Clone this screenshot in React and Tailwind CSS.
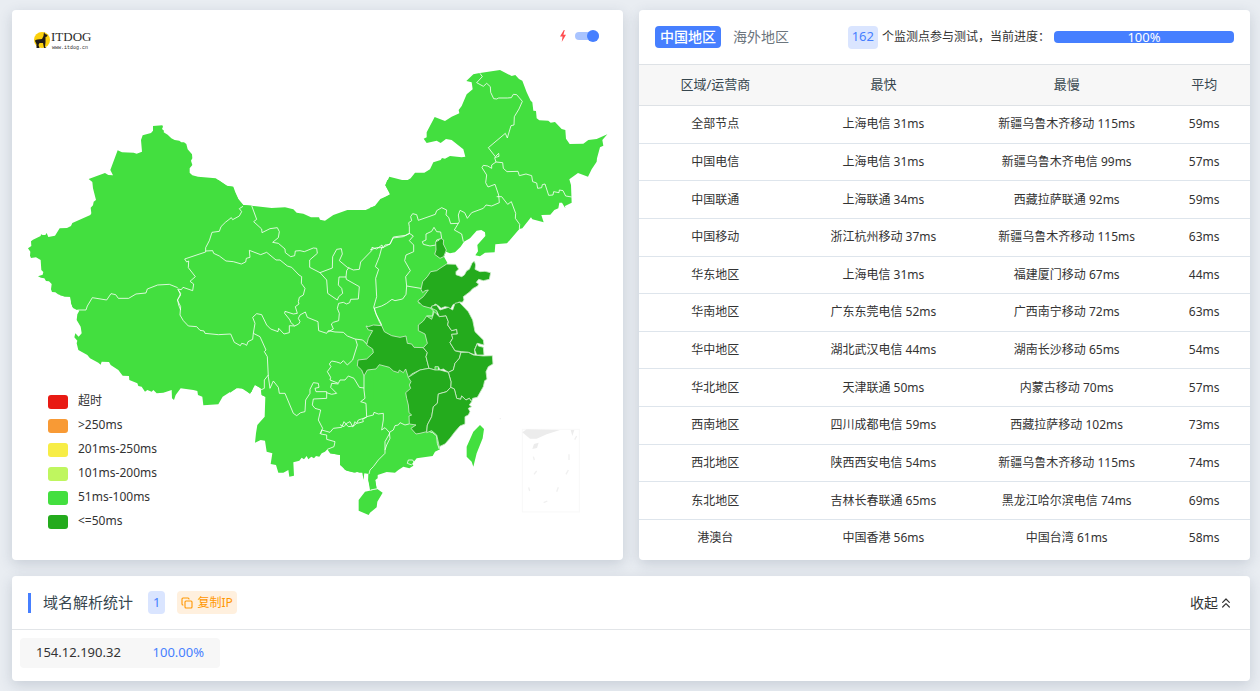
import React from "react";
import { ChevronsUp, Copy } from "lucide-react";

const LAND = "#43df3f";
const FAST = "#24ab1d";

/* Each sheet is drawn at three times the size of the map canvas. */
const SHEETS = [
  {
    x: 12, y: 110,
    land: ["423,48 451,46 453,50 450,57 456,62 455,67 467,74 478,85 488,90 502,92 508,97 516,97 523,102 527,118 540,133 541,145 537,152 541,165 533,175 533,188 541,196 558,200 611,205 647,229 662,230 666,243 680,270 693,285 720,287 720,600 195,600 183,594 177,580 176,560 158,560 138,553 130,547 120,546 117,538 119,522 111,514 102,513 97,505 87,503 78,499 92,494 94,486 88,480 86,450 72,442 57,444 54,437 55,425 48,415 58,408 57,394 63,389 86,378 87,373 92,375 100,375 104,369 109,381 129,377 143,355 165,354 177,348 181,339 235,315 238,310 236,293 243,286 245,275 252,270 243,235 241,216 230,207 279,189 289,195 303,196 295,180 317,121 330,127 365,128 374,131 390,125 387,90 392,76 417,69 423,62"],
    lines: [
      "693,289 682,296 689,305 682,318 662,329 658,323 640,337 627,350 622,364 600,367 592,392 581,413 581,426 518,447 524,456 530,453 529,473 550,500 534,514 545,522 542,542 513,532 508,539 497,537",
      "497,533 472,523 437,525 406,537 402,549 372,552 350,565 319,565 311,554 297,551 284,570 241,563 226,588 222,600 196,600",
      "497,537 506,550 497,570 500,585 506,600",
    ],
  },
  {
    x: 200, y: 180,
    land: ["55,0 80,17 100,20 106,37 115,57 130,75 155,77 215,84 255,82 280,88 290,98 310,101 333,112 357,112 360,119 375,122 400,105 442,90 497,90 525,77 541,57 570,44 569,38 556,16 562,0 630,0 630,600 0,600 0,0"],
    lines: [
      "155,77 170,118 161,125 185,147 186,158 210,146 232,143 238,155 235,173 218,187 235,190 255,207 256,218 272,230 284,227 286,213 300,212 313,215 340,204 350,205 352,220 329,240 329,262 360,278 397,264 398,230 410,208 424,206 427,222 418,242 442,262 460,270 478,268 482,246 515,212 516,202 530,207 546,195 548,203 570,192 579,174 610,170 630,160",
      "360,278 380,300 383,340 412,360 416,350 428,340 425,325 415,315 417,291 438,291 439,298 478,320 475,357 452,358 449,368 440,372 430,367 416,370 412,385 418,400 416,422 400,427 394,432 400,447 384,456",
      "438,291 440,272 447,262",
      "546,200 538,230 526,260 536,268 527,295 530,350 521,382 530,405 543,430 545,438",
      "17,213 38,212 41,220 58,228 78,243 100,245 124,252 137,246 139,235 150,232 148,211 182,224 200,217 228,240 240,240 262,258 275,262 297,285 305,290 304,310 315,325 310,345 298,352 295,365 297,372 286,380 292,400 280,402 255,394 254,400 270,420 272,427 284,438 296,432 300,425 295,415 300,405 316,396 322,412 354,425 356,452 380,460 385,452 405,456 430,457 442,468 465,477 488,480 500,492",
      "284,438 268,437 268,458 252,462 236,445 234,455 212,447 200,435 185,404 170,401 158,412 165,430 160,460",
      "0,451 12,453 15,460 55,464 92,462 103,487 121,497 125,490 133,492 140,496 144,485 158,478 160,460",
    ],
  },
  {
    x: 370, y: 60,
    land: ["0,443 20,437 33,419 60,403 46,376 58,350 108,363 122,355 135,338 163,338 180,328 190,307 212,300 216,294 225,296 240,288 275,292 286,290 280,268 245,240 228,237 212,249 200,242 170,249 161,236 170,232 170,217 194,171 225,183 245,170 268,160 266,150 275,138 290,103 308,88 305,67 289,63 310,43 325,40 390,30 425,48 436,45 447,57 457,62 470,97 482,122 487,127 490,152 498,153 500,175 508,181 535,182 542,188 555,186 575,207 586,210 588,236 599,252 640,251 655,240 680,237 712,223 697,240 700,257 690,262 681,295 680,305 665,328 654,350 624,339 598,358 603,375 605,428 585,438 586,445 576,428 568,428 565,445 553,450 541,464 514,465 521,487 487,478 483,472 457,505 448,507 411,550 376,553 374,577 345,578 330,589 316,586 324,574 322,555 346,528 345,517 334,510 320,512 300,535 282,545 272,560 255,577 240,580 228,575 222,590 222,600 0,600"],
    lines: [
      "330,40 337,50 320,68 340,79 350,70 361,80 362,97 371,116 380,117 386,114 412,114 424,113 430,103 440,104 457,124 447,147 433,170 432,195 423,197 412,234 406,220 355,263 376,290 386,280 387,289 374,293 378,306",
      "378,306 398,308 400,325 411,335 444,334 448,347 468,342 485,347 488,365 500,369 503,385 515,383 517,374 525,372 536,406 549,405 551,395 567,398 568,390 579,392 587,408 605,411",
      "378,306 365,315 365,325 353,318 340,316 336,323 350,345 347,368 354,381 375,373 386,405",
      "380,410 395,410 413,433 424,425 437,460 436,475 449,493 448,507",
      "386,405 388,428 365,438 348,435 340,445 305,458 292,475 284,458 270,451 265,465 268,485 253,510 275,522 280,545",
      "265,490 242,491 236,472 228,465 230,450 215,443 200,452 196,463 145,481 140,464 128,461 122,470 125,482 116,488 118,500 118,520 106,526 70,531 60,553 45,555 40,563 20,563 0,570",
    ],
    loops: ["192,502 200,515 212,516 215,535 200,540 198,555 180,558 160,553 157,545 168,540 168,522 185,514"],
    fast: ["213,535 221,540 220,552 229,570 221,590 210,595 194,583 198,570 197,545 207,541"],
  },
  {
    x: 370, y: 200,
    land: ["0,150 225,150 222,170 232,188 180,300 200,360 0,360"],
    lines: [
      "118,100 130,108 118,122 131,135 131,155 108,165 104,182 121,212 107,230 110,258 158,266 155,272",
      "110,258 108,283 98,297 75,302 66,298 50,310 35,318 12,325",
    ],
    fast: ["230,192 257,193 266,207 258,215 258,224 275,230 283,225 290,212 298,208 306,190 313,183 317,195 315,208 330,215 345,214 362,218 358,238 340,242 326,238 319,247 326,252 323,258 308,266 300,275 280,290 282,300 277,307 266,306 262,315 250,313 243,325 238,330 235,322 225,320 213,325 205,317 195,312 190,321 180,324 158,318 143,303 160,290 175,270 165,272 158,278 153,268 158,245 172,230 182,215 200,212 210,205"],
  },
  {
    x: 340, y: 290,
    land: ["0,0 250,0 290,50 300,450 298,480 0,480"],
    lines: [
      "235,38 265,48 280,62 278,78 260,78",
      "103,53 107,70 118,95 125,107",
      "72,258 72,300 75,325 62,335 78,340 80,380 100,375 102,367 115,372 130,370 130,390 125,420 135,413 148,427 150,445 140,465 135,480",
      "148,427 160,420 165,407 175,405 180,398 195,405 207,402",
      "80,380 68,388 70,395 60,398 50,400 38,410 30,395 20,400 12,410 0,404",
    ],
    fast: [
      "78,108 85,110 100,105 125,107 133,125 155,137 180,142 198,138 202,160 215,162 222,172 250,173 262,188 258,200 267,235 240,240 215,252 205,262 197,237 190,248 178,240 175,248 160,243 148,232 118,224 108,237 82,240 72,258 65,240 52,228 54,210 80,207 100,188 98,177 80,165 85,145 98,122 85,120",
      "283,65 298,80 318,77 325,95 323,105 335,122 350,118 352,132 335,133 338,145 330,158 345,182 363,187 358,205 345,220 340,240 325,247 310,237 300,240 295,230 285,230 285,240 267,235 258,200 262,188 250,173 262,160 255,132 235,122 235,105 250,93 260,78 275,88",
      "275,48 290,45 300,60 325,52 338,60 345,40 358,37 385,65 398,90 405,125 430,150 432,165 412,160 404,178 405,195 385,187 365,185 345,182 330,158 338,145 335,133 352,132 350,118 335,122 323,105 325,95 318,77 298,80 290,62 275,55",
      "412,160 415,168 430,172 432,195 410,195 404,180",
      "363,187 385,187 400,195 430,198 457,197 459,222 445,230 438,245 441,268 434,272 430,290 412,322 398,325 395,335 388,325 378,330 365,318 362,328 350,325 343,297 332,292 333,275 325,247 340,240 345,220 358,205",
      "205,262 240,240 267,235 285,240 300,240 325,247 333,275 332,292 320,305 295,312 292,340 280,350 275,380 262,405 260,425 240,430 228,432 213,415 228,405 208,402 207,378 215,375 207,368 205,345 200,325 197,308 212,295 208,285 213,275",
      "332,292 343,297 350,325 362,328 365,318 378,330 388,325 395,335 388,345 395,350 385,355 390,365 385,375 375,380 375,402 360,408 345,425 330,445 315,462 298,470 290,435 275,422 260,428 262,405 275,380 280,350 292,340 295,312 320,305",
    ],
  },
  {
    x: 230, y: 300,
    land: ["0,0 430,0 430,520 442,525 435,540 440,567 420,570 415,540 415,515 402,520 400,540 398,518 388,518 380,515 370,517 345,510 330,490 332,465 300,460 292,448 285,455 275,460 268,470 258,468 252,475 244,470 235,478 230,468 222,478 215,473 208,482 190,487 192,527 178,530 175,510 160,518 145,518 138,495 122,492 127,460 110,455 105,422 92,420 75,428 78,400 82,375 104,350 106,290 95,285 92,265 72,253 65,275 58,280 35,265 20,265 0,278"],
    lines: [
      "70,100 90,110 108,150 103,155 112,170 115,230 120,265 130,243 145,262 148,280 165,280 190,340 200,347 212,338 225,335 227,300 240,280 240,268 250,248 265,250 267,262 255,265 258,275 290,275 290,295 250,297 247,315 255,325 272,330 265,360 278,385 270,402",
      "115,225 103,240 103,265 92,270",
      "290,278 305,283 320,280 302,262 305,250 325,252",
      "377,118 382,135 368,180 352,195 340,182 332,190 320,186 305,183 298,192 303,200 292,215 302,232 300,240 325,250 330,240 345,240 355,228 372,235 388,262 402,264",
      "275,390 272,402 290,405 290,418 315,425 312,440 292,448",
      "410,352 385,360 380,370 375,365 370,378 355,380 342,365 335,382 310,385 300,397 275,390",
    ],
  },
  {
    x: 330, y: 400,
    land: [
      "0,0 300,0 300,90 325,140 330,148 315,155 308,168 260,175 248,190 250,197 238,205 220,200 205,210 195,218 170,216 143,225 143,235 136,240 140,268 122,268 115,240 117,222 103,220 100,238 97,215 90,212 75,218 50,212 30,195 30,165 0,160",
      "105,275 142,267 158,278 142,305 140,322 120,338 116,345 86,332 86,300",
      "450,75 462,87 458,115 440,160 430,200 425,185 410,170 410,140 430,95",
    ],
    lines: [
      "180,98 165,125 165,160 145,180 130,200 120,210 117,222",
      "245,195 232,190 235,180 248,180 252,187 245,195",
      "122,270 142,266",
      "290,92 308,98 320,108 322,130 328,148",
    ],
  },
  {
    x: 60, y: 280,
    land: ["0,46 30,50 37,80 58,92 52,103 50,120 62,140 65,160 56,170 46,160 43,172 52,182 50,190 55,210 82,225 90,235 115,248 122,254 125,245 147,246 152,255 175,270 188,287 207,288 208,300 232,310 235,318 245,320 255,335 262,330 275,335 280,330 290,340 310,338 335,330 336,355 342,360 347,345 362,325 400,330 412,333 414,345 427,350 430,376 475,373 488,350 530,323 555,327 570,342 585,315 603,325 605,345 616,350 660,350 660,0 0,0"],
    lines: ["355,30 362,45 352,60 362,80 360,105 370,122 385,138 410,140 420,151"],
  },
];

const LEGEND = [
  ["超时", "bg-[#e81a13]"],
  [">250ms", "bg-[#f89a35]"],
  ["201ms-250ms", "bg-[#f7ed46]"],
  ["101ms-200ms", "bg-[#bff65f]"],
  ["51ms-100ms", "bg-[#43df3f]"],
  ["<=50ms", "bg-[#24ab1d]"],
];

const ROWS = [
  ["全部节点", "上海电信 31ms", "新疆乌鲁木齐移动 115ms", "59ms"],
  ["中国电信", "上海电信 31ms", "新疆乌鲁木齐电信 99ms", "57ms"],
  ["中国联通", "上海联通 34ms", "西藏拉萨联通 92ms", "59ms"],
  ["中国移动", "浙江杭州移动 37ms", "新疆乌鲁木齐移动 115ms", "63ms"],
  ["华东地区", "上海电信 31ms", "福建厦门移动 67ms", "44ms"],
  ["华南地区", "广东东莞电信 52ms", "广西南宁移动 72ms", "63ms"],
  ["华中地区", "湖北武汉电信 44ms", "湖南长沙移动 65ms", "54ms"],
  ["华北地区", "天津联通 50ms", "内蒙古移动 70ms", "57ms"],
  ["西南地区", "四川成都电信 59ms", "西藏拉萨移动 102ms", "73ms"],
  ["西北地区", "陕西西安电信 54ms", "新疆乌鲁木齐移动 115ms", "74ms"],
  ["东北地区", "吉林长春联通 65ms", "黑龙江哈尔滨电信 74ms", "69ms"],
  ["港澳台", "中国香港 56ms", "中国台湾 61ms", "58ms"],
];

const place = (s) => `translate(${s.x} ${s.y}) scale(0.33333)`;

function ChinaMap() {
  return (
    <svg viewBox="12 10 611 550" className="h-auto w-full [grid-area:1/1]" role="img" aria-label="中国地图">
      {SHEETS.map((s, i) => (
        <g key={i} transform={place(s)} fill={LAND}>
          {s.land.map((p) => <polygon key={p} points={p} />)}
        </g>
      ))}
      {SHEETS.map((s, i) => (
        <g key={i} transform={place(s)} fill="none" stroke="#fff" strokeOpacity="0.8" strokeWidth="3" strokeLinejoin="round">
          {s.lines.map((p) => <polyline key={p} points={p} />)}
          {(s.loops || []).map((p) => <polygon key={p} points={p} />)}
        </g>
      ))}
      {SHEETS.map((s, i) => (
        <g key={i} transform={place(s)} fill={FAST} stroke="#cdebc9" strokeWidth="2.5" strokeLinejoin="round">
          {(s.fast || []).map((p) => <polygon key={p} points={p} />)}
        </g>
      ))}
      <g transform="translate(330 400) scale(0.33333)">
        <rect x="577" y="88" width="171" height="248" fill="none" stroke="#f8f8f8" strokeWidth="3" />
        <path d="M577 97 590 88 690 90 650 103 620 116 600 116ZM722 90 733 90 727 108ZM612 132 626 128 621 144 607 147Z" fill="#ececec" />
        <path d="M610 170 613 180M717 163V180M715 210 708 223M620 213 612 223M596 262 599 273M685 262 680 275M652 303 641 308M740 108 734 119M509 56H513" stroke="#f0f0f0" strokeWidth="4" />
      </g>
    </svg>
  );
}

function Logo() {
  return (
    <svg viewBox="0 0 60 20" className="h-5 w-15" role="img" aria-label="ITDOG">
      <circle cx="8" cy="10" r="8" fill="#fbd00d" />
      <path d="M10 2 11 4 13.500 5 13 6.500 11.500 7 11.500 12 11 17 12.500 18H10L9 13 5.500 13 4.500 15 5.500 18H2.500L2.500 14 1 11 1.500 10 3.500 9.500 8 9 9.500 6Z" fill="#1f1a17" />
      <text x="17" y="11" fontSize="13" fontFamily="Liberation Serif, serif" fill="#2b2b2b">ITDOG</text>
      <text x="18" y="19" fontSize="5" fontFamily="Liberation Mono, monospace" fill="#333">www.itdog.cn</text>
    </svg>
  );
}

function MapCard() {
  return (
    <section className="grid content-start rounded bg-white shadow-[0_4px_14px_rgba(43,61,90,0.18)]">
      <ChinaMap />
      <div className="flex items-start justify-between pt-[18px] pr-6 pl-[22px] [grid-area:1/1]">
        <div className="pt-0.5"><Logo /></div>
        <label className="flex items-center gap-2">
          <svg viewBox="0 0 8 14" className="h-3 w-2" aria-hidden="true">
            <path d="M5 0 0.500 7.500H3.500L2.500 14 7.500 5.500H4.500L6 0Z" fill="#ff4d4f" />
          </svg>
          <input type="checkbox" role="switch" defaultChecked aria-label="闪电模式" className="peer sr-only" />
          <span className="my-1 flex h-2 w-6 items-center justify-end rounded-full bg-[#a9c4ff]">
            <span className="size-3 shrink-0 rounded-full bg-[#467fff]" />
          </span>
        </label>
      </div>
      <ul className="flex flex-col gap-2 self-end pb-[31px] pl-9 text-xs leading-4 text-[#333] [grid-area:1/1]">
        {LEGEND.map(([label, color]) => (
          <li key={label} className="flex items-end gap-2.5">
            <span className={`h-3.5 w-5 rounded-[3px] ${color}`} />
            {label}
          </li>
        ))}
      </ul>
    </section>
  );
}

function StatsCard() {
  return (
    <section className="rounded bg-white shadow-[0_4px_14px_rgba(43,61,90,0.18)]">
      <div className="flex h-[54px] items-center px-4">
        <button className="h-[22px] rounded bg-[#467fff] px-[5px] text-sm leading-5 font-medium text-white">中国地区</button>
        <button className="ml-2 px-1 text-sm leading-5 text-[#6c757d]">海外地区</button>
        <div className="ml-auto flex items-center text-xs text-[#333]">
          <span className="mr-1 flex h-[23px] items-center rounded bg-[#dae5ff] px-1 text-[13px] text-[#467fff]">162</span>
          <span>个监测点参与测试，当前进度：</span>
          <div role="progressbar" aria-label="当前进度" aria-valuenow={100} className="ml-1 h-3 w-[180px] rounded bg-[#467fff] text-center text-[13px] leading-3 text-white">100%</div>
        </div>
      </div>
      <table className="h-[492px] w-full table-fixed text-center text-xs text-[#333]">
        <thead>
          <tr className="h-[41px] border-y border-[#dee2e6] bg-[#f7f7f7] text-[13px] text-[#37474f]">
            <th className="w-[25%] font-normal">区域/运营商</th>
            <th className="w-[30%] font-normal">最快</th>
            <th className="w-[30%] font-normal">最慢</th>
            <th className="w-[15%] font-normal">平均</th>
          </tr>
        </thead>
        <tbody>
          {ROWS.map((row) => (
            <tr key={row[0]} className="border-b border-[#dee5ec] last:border-b-0">
              {row.map((cell, i) => <td key={i}>{cell}</td>)}
            </tr>
          ))}
        </tbody>
      </table>
    </section>
  );
}

function ResolveCard() {
  return (
    <section className="mt-4 rounded bg-white shadow-[0_4px_14px_rgba(43,61,90,0.18)]">
      <div className="flex h-[54px] items-center border-b border-[#e2e5e8] px-4">
        <span className="h-5 w-[3px] bg-[#467fff]" />
        <h2 className="ml-3 text-[15px] text-[#37474f]">域名解析统计</h2>
        <span className="ml-[15px] flex h-[23px] items-center rounded bg-[#dae5ff] px-[5px] text-[13px] text-[#467fff]">1</span>
        <button className="ml-3 flex h-[23px] items-center gap-1 rounded bg-[#fff0de] px-1 text-xs text-[#ff9702]">
          <Copy className="size-3" strokeWidth={2.2} />
          复制IP
        </button>
        <button className="ml-auto flex items-center text-sm text-[#333]">
          收起
          <ChevronsUp className="size-4" strokeWidth={1.8} />
        </button>
      </div>
      <div className="px-2 pt-2 pb-[13px]">
        <div className="flex h-[30px] w-[200px] items-center justify-between rounded bg-[#f7f7f7] px-4 text-[13px]">
          <span className="text-[#333]">154.12.190.32</span>
          <span className="text-[#467fff]">100.00%</span>
        </div>
      </div>
    </section>
  );
}

export default function App() {
  return (
    <main className="min-h-screen bg-[#e9edf2] pt-2.5 pr-2.5 pb-2.5 pl-3 font-['Noto_Sans','Noto_Sans_CJK_SC',sans-serif]">
      <div className="grid grid-cols-2 gap-4">
        <MapCard />
        <StatsCard />
      </div>
      <ResolveCard />
    </main>
  );
}
